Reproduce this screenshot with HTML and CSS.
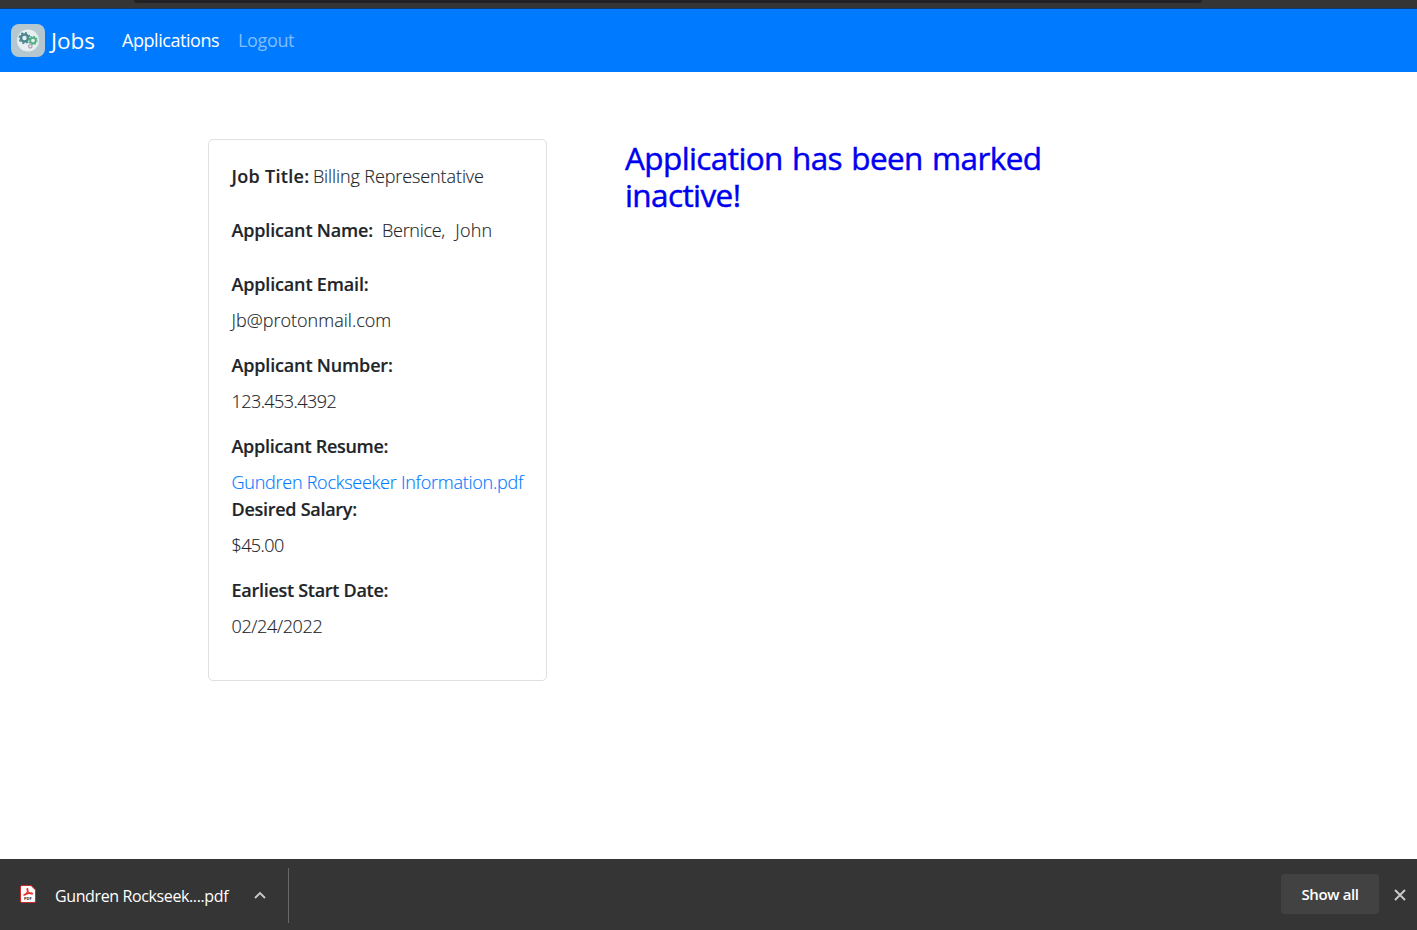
FILE: index.html
```html
<!DOCTYPE html>
<html lang="en">
<head>
<meta charset="utf-8">
<title>Jobs</title>
<link rel="stylesheet" href="styles.css">
</head>
<body>
<div class="browser-edge"><div class="address-bar"></div></div>
<nav class="navbar">
  <svg class="logo" viewBox="0 0 34 34">
    <rect width="34" height="33" rx="8" fill="#b5c8d0"/>
    <circle cx="17" cy="16.500" r="11" fill="#e6eff2"/>
    <circle cx="13.500" cy="14" r="3.500" fill="none" stroke="#4f8990" stroke-width="2.600"/>
    <circle cx="13.500" cy="14" r="5.200" fill="none" stroke="#4f8990" stroke-width="1.600" stroke-dasharray="2.04 2.04"/>
    <circle cx="22" cy="16.500" r="2.800" fill="none" stroke="#55b184" stroke-width="1.900"/>
    <circle cx="22" cy="16.500" r="4.100" fill="none" stroke="#55b184" stroke-width="1.200" stroke-dasharray="1.600 1.600"/>
    <circle cx="19.300" cy="22.300" r="1.700" fill="none" stroke="#b7a3ae" stroke-width="1.300"/>
  </svg>
  <span class="brand">Jobs</span>
  <a class="nav-link active">Applications</a>
  <a class="nav-link">Logout</a>
</nav>
<main class="content">
  <section class="card">
    <div class="row gap"><b class="job-label">Job Title:</b><span class="job-title">Billing Representative</span></div>
    <div class="row gap"><b>Applicant Name:</b><span class="last-name">Bernice,</span><span class="first-name">John</span></div>
    <div class="row label"><b>Applicant Email:</b></div>
    <div class="row para"><span class="email">Jb@protonmail.com</span></div>
    <div class="row label"><b>Applicant Number:</b></div>
    <div class="row para"><span class="phone">123.453.4392</span></div>
    <div class="row label"><b class="tight">Applicant Resume:</b></div>
    <div class="row"><a class="file">Gundren Rockseeker Information.pdf</a></div>
    <div class="row label"><b class="tight">Desired Salary:</b></div>
    <div class="row para"><span class="salary">$45.00</span></div>
    <div class="row label"><b class="tight">Earliest Start Date:</b></div>
    <div class="row"><span class="date">02/24/2022</span></div>
  </section>
  <h1 class="message">Application has been marked inactive!</h1>
</main>
<footer class="downloads">
  <svg class="pdf" viewBox="0 0 16 18">
    <path d="M2 .5H11L15.500 5V16Q15.500 17.500 14 17.500H2Q.5 17.500 .5 16V2Q.5.5 2 .5Z" fill="#fff" stroke="#cf2b2b"/>
    <path d="M3.500 10.200C6 9 8.500 6.500 7.600 3.700C6.800 3 6.600 5.500 8.800 7.600C10.500 9 12.500 9.300 12.600 8.600C12.500 7.500 8 7.800 4.200 10.200Z" fill="none" stroke="#e0302c" stroke-width="1.300"/>
  </svg>
  <span class="pdf-tag">PDF</span>
  <span class="filename">Gundren Rockseek....pdf</span>
  <svg class="chevron" viewBox="0 0 12 8"><path d="M1 7L6 2L11 7" fill="none" stroke="#c8c8c8" stroke-width="1.900"/></svg>
  <span class="divider"></span>
  <button class="show-all">Show all</button>
  <svg class="close" viewBox="0 0 12 12"><path d="M1 1L11 11M11 1L1 11" fill="none" stroke="#c8c8c8" stroke-width="2"/></svg>
</footer>
</body>
</html>
```
FILE: styles.css
```css
* { box-sizing: border-box; }
body { margin: 0; height: 930px; overflow: hidden; display: flex; flex-direction: column; font: 18px/27px "Open Sans", sans-serif; color: #212529; background: #fff; }

.browser-edge { height: 9px; background: #353535; flex: none; border-bottom: 1px solid #0b3b70; padding-left: 134px; }
.address-bar { width: 1068px; height: 3px; background: #202124; border-radius: 0 0 8px 8px; }

.navbar { height: 63px; background: #007bff; display: flex; align-items: center; flex: none; color: #fff; padding-left: 11px; }
.logo { width: 34px; height: 34px; margin-right: 6px; }
.brand { font-size: 22.5px; width: 71px; }
.nav-link { color: #80bdff; width: 116px; letter-spacing: -0.35px; }
.nav-link.active { color: #fff; letter-spacing: -0.45px; }

.content { flex: 1; display: flex; gap: 78px; padding: 67px 0 0 208px; align-items: flex-start; }
.card { width: 339px; height: 542px; border: 1px solid #dfdfdf; border-radius: 5px; padding: 23px 22.5px; font-weight: 300; -webkit-text-stroke: 0.15px; }
.card b { font-weight: 600; letter-spacing: -0.16px; }
.card b.job-label { letter-spacing: 0.3px; }
.card b.tight { letter-spacing: -0.28px; }
.row { display: flex; white-space: pre; }
.gap { margin-bottom: 27px; }
.label { margin-bottom: 9px; }
.para { margin-bottom: 18px; }
.job-title { margin-left: 3.5px; letter-spacing: -0.1px; }
.last-name { margin-left: 9px; letter-spacing: -0.3px; }
.first-name { margin-left: 10.5px; letter-spacing: 0.2px; }
.email { letter-spacing: 0.02px; }
.phone { letter-spacing: -0.56px; }
.file { color: #007bff; letter-spacing: -0.25px; }
.salary { letter-spacing: -0.6px; }
.date { letter-spacing: -0.36px; }
.message { margin: 0; width: 450px; color: #0000f0; font-size: 31.5px; font-weight: 400; line-height: 37px; letter-spacing: -0.6px; word-spacing: 1.6px; -webkit-text-stroke: 0.45px; }

.downloads { height: 71px; background: #353535; color: #fff; font-size: 16px; display: flex; align-items: center; padding-left: 20px; }
.pdf { width: 16px; height: 18px; margin-bottom: 2px; }
.pdf-tag { font: 700 4px/4px "Open Sans", sans-serif; color: #222; margin: 8px 0 0 -12px; width: 31px; }
.filename { width: 174px; letter-spacing: -0.38px; margin-top: 3px; white-space: nowrap; }
.chevron { width: 12px; height: 8px; margin-left: 25px; }
.divider { width: 1px; height: 55px; background: #686868; margin: 1px 0 0 22px; }
.show-all { margin: 0 0 2px auto; width: 98px; height: 40px; border: 0; border-radius: 4px; background: #424242; color: #fff; font: 600 15px "Open Sans", sans-serif; letter-spacing: -0.36px; }
.close { width: 12px; height: 12px; margin: 0 11px 0 15px; }
```
